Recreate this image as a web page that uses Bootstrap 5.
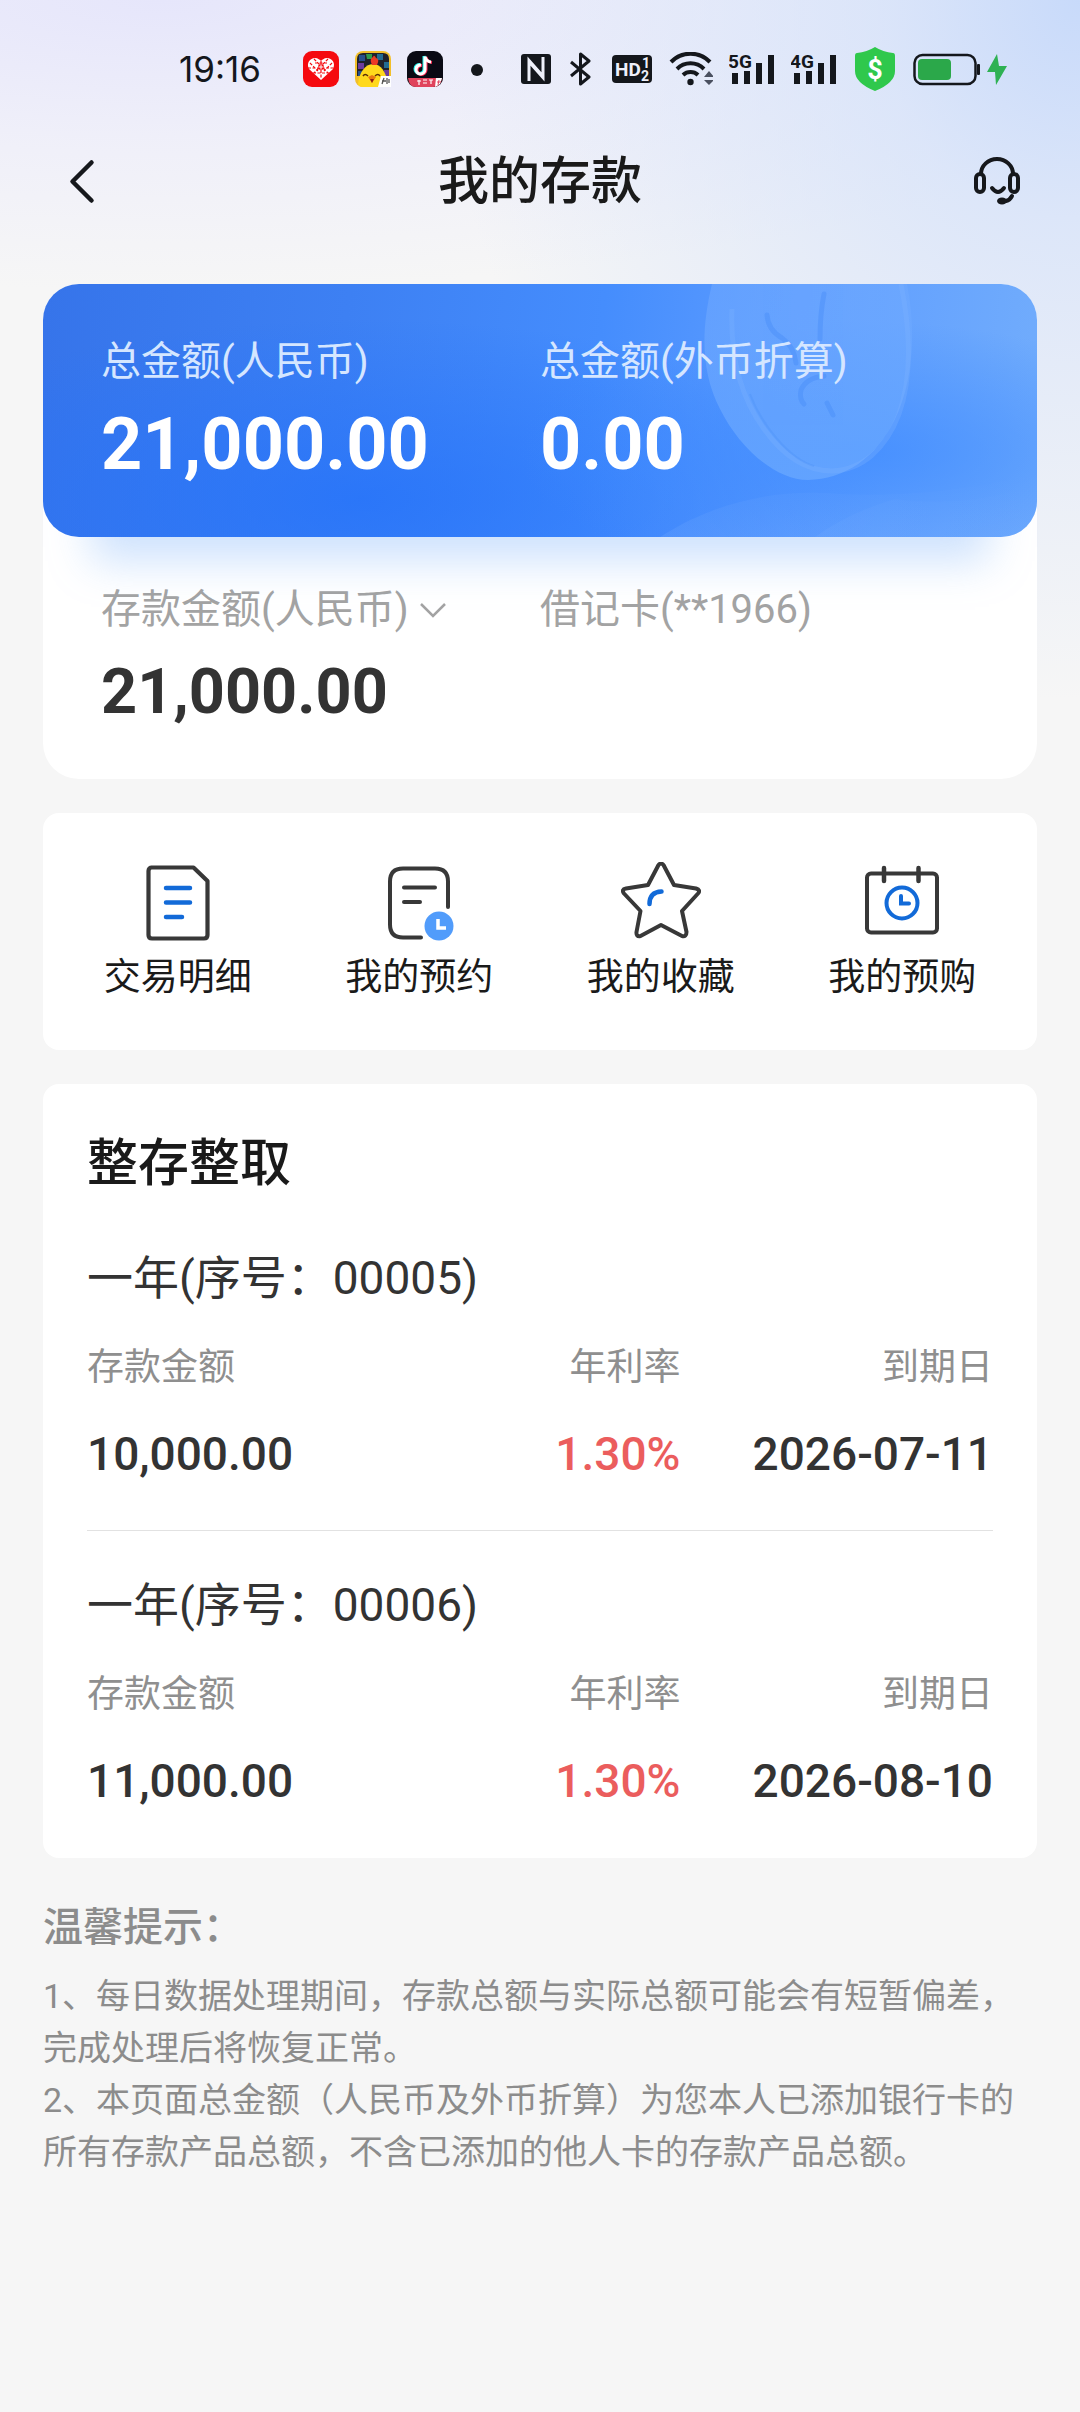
<!DOCTYPE html>
<html lang="zh-CN">
<head>
<meta charset="utf-8">
<meta name="viewport" content="width=device-width, initial-scale=1">
<title>我的存款</title>
<link href="https://cdn.jsdelivr.net/npm/bootstrap@5.3.0/dist/css/bootstrap.min.css" rel="stylesheet">
<style>
  body {
    font-family: Roboto, "Noto Sans CJK SC", sans-serif;
    font-size: 40px;
    line-height: 56px;
    color: #333;
    min-height: 100vh;
    background:
      radial-gradient(ellipse 640px 700px at 100% 0, #c8dafa 0, rgba(212,225,250,.75) 32%, rgba(246,246,246,0) 100%) no-repeat,
      radial-gradient(ellipse 1100px 290px at 15% 0, #e6e6fb 0, rgba(238,238,250,.8) 50%, rgba(246,246,246,0) 100%) no-repeat,
      #f6f6f6;
  }
  .status-bar { height: 138px; padding-right: 73px; gap: 16px; color: #14171c; }
  .clock { font-family: Inter, sans-serif; font-size: 35px; margin-right: 26px; }
  .app-bar { height: 88px; padding: 0 60px; }
  .app-bar h1, .section-title { font-size: 51px; line-height: 64px; font-weight: 500; color: #1a1a1a; margin: 0; }
  .icon-btn { width: 56px; height: 56px; padding: 0; border: 0; background: none; display: block; }
  .icon-btn svg { display: block; }
  .page { padding: 58px 43px 64px; }
  .panel { background: #fff; border-radius: 16px; margin-top: 34px; }
  .summary { border-radius: 36px; margin-top: 0; }
  .hero {
    border-radius: 36px; padding: 50px 58px 37px; color: #fff;
    background:
      radial-gradient(ellipse 340px 130px at 82% 66%, rgba(64,140,255,.8), rgba(64,140,255,0)) no-repeat,
      radial-gradient(ellipse 520px 180px at 32% 85%, rgba(36,114,250,.75), rgba(36,114,250,0)) no-repeat,
      linear-gradient(97deg, #3674ea 0%, #3d80f3 30%, #458dfd 55%, #5e9dff 75%, #72adfc 100%);
    box-shadow: 0 72px 40px -48px rgba(120,176,250,.36);
  }
  .hero-art { position: absolute; right: 0; top: 0; width: 397px; height: 100%; border-radius: 0 36px 36px 0; }
  .hero .row { position: relative; }
  .caption-soft { color: #d5e6ff; }
  .total-sum { font-size: 72px; line-height: 110px; font-weight: 700; }
  .detail { padding: 45px 58px 33px; color: #a3a3a3; }
  .detail-sum { font-size: 63px; line-height: 108px; font-weight: 700; color: #333; }
  .kind-select { appearance: none; border: 0; background: none; padding: 0; color: inherit; font: inherit; line-height: 56px; }
  .shortcuts { padding: 49px 14px 44px; }
  .shortcuts a { color: #1a1a1a; font-size: 37px; gap: 8px; }
  .deposits { padding: 48px 44px 1px; }
  .deposit { padding-bottom: 44px; }
  .deposit + .deposit { border-top: 1px solid #e2e2e2; padding-top: 42px; }
  .deposit h3 { font-size: 46px; line-height: 64px; font-weight: 400; margin: 0; }
  .deposit-first { margin-top: 50px; }
  .figures { width: 100%; margin-top: 30px; table-layout: fixed; }
  .figures th { font-size: 37px; line-height: 56px; font-weight: 400; color: #8f8f8f; padding: 0; }
  .figures td { font-size: 46px; line-height: 64px; font-weight: 500; padding: 26px 0 0; }
  .figures .c-sum { width: 33%; }
  .figures .c-rate { width: 32.5%; }
  .figures .rate { color: #eb5d5d; }
  .tips { margin-top: 42px; color: #8c8c8c; font-size: 34px; line-height: 52px; }
  .tips h2 { font-size: 40px; line-height: 56px; font-weight: 500; margin: 0 0 14px; }
</style>
</head>
<body>
<div class="status-bar d-flex align-items-center justify-content-end">
  <span class="clock">19:16</span>
  <svg width="36" height="36" viewBox="0 0 36 36" aria-hidden="true"><rect width="36" height="36" rx="9" fill="#f50a0f"/><path d="M18 29 6 18C3 12 7 7 12 7c3 0 5 2 6 3 1-1 3-3 6-3 5 0 9 5 6 11z" fill="#fff"/><path d="m7 12 8 8M11 8l14 14M29 12l-8 8M25 8 11 22M18 10v18M5 17h26M12 12h12M10 22h16" stroke="#f50a0f" stroke-width="1.2" stroke-dasharray="3 1.5" fill="none"/><circle cx="18" cy="16" r="3" fill="#f50a0f"/><path d="M18 13.500v5M15.500 16h5" stroke="#fff"/></svg>
  <svg width="36" height="36" viewBox="0 0 36 36" aria-hidden="true"><rect width="36" height="36" rx="8" fill="#f2bf2a"/><path d="M2 8q0-6 6-6h20q6 0 6 6v17H2z" fill="#20222c"/><path d="M4 4h6v6H4zM3 20h4v5H3z" fill="#274f8c"/><path d="M11 3h6v5h-5z" fill="#2d9a4c"/><path d="M22 3h6v6h-6zM29 11h5v6h-5z" fill="#236b91"/><path d="M3 12h6v6H3zM29 19h5v6h-5z" fill="#6d3c9d"/><path d="M3 33c1-11 7-20 15-20s13 8 15 20q-2 3-7 3H8q-4 0-5-3z" fill="#ffd91c"/><path d="M17 14q-3-6 1-8 1-3 3 1 4 1 1 7z" fill="#ea3b26"/><path d="M8 25q2-3 5 0M20 25q3-3 5 0" stroke="#5a2e08" stroke-width="1.500" fill="none"/><path d="m13 26 4-2 4 2-4 6z" fill="#e77812"/><path d="M15 28h4l-2 4z" fill="#8e1c12"/><path d="M26 25h10v11H23z" fill="#fff"/><path d="m27 33 2-6m-2 3h4m1-3v6m2-5v4" stroke="#555" stroke-width="1.300"/></svg>
  <svg width="36" height="36" viewBox="0 0 36 36" aria-hidden="true"><rect width="36" height="36" rx="9" fill="#0a0a14"/><path d="M1 27h34q-1 9-9 9H9q-7 0-8-9z" fill="#e0435c"/><path d="M29 27h6l-2 6-5 3z" fill="#fff"/><path d="m32 29-1 5m-1-3h4" stroke="#e0435c"/><g fill="none" stroke-width="3"><path d="M17 5v13a4.500 4.500 0 1 1-4-4.500M17 5q1 5 6 5.500" stroke="#25f4ee"/><path d="M19 6v13a4.500 4.500 0 1 1-4-4.500M19 6q1 5 6 5.500" stroke="#fe2c55"/><path d="M18 5.500v13a4.500 4.500 0 1 1-4-4.500M18 5.500q1 5 6 5.500" stroke="#fff"/></g><path d="M10 30h4m-2-1v5m4-5h4m-4 3h4m2-3h4m-2 0v4" stroke="#fff" stroke-width="1.200"/></svg>
  <svg width="46" height="36" viewBox="0 0 46 36" aria-hidden="true"><circle cx="18" cy="19" r="6" fill="#14171c"/></svg>
  <svg width="30" height="34" viewBox="0 0 30 34" aria-hidden="true"><rect y="2" width="30" height="30" rx="3" fill="#14171c"/><path d="M8 29V8.500L20 22M22 5v20.500L10 12" fill="none" stroke="#eef0fa" stroke-width="3"/></svg>
  <svg width="28" height="34" viewBox="0 0 28 34" aria-hidden="true"><path d="m4 10 18 15-8.500 7V2L22 9 4 24" fill="none" stroke="#14171c" stroke-width="3" stroke-linejoin="round"/></svg>
  <svg width="42" height="34" viewBox="0 0 42 34" aria-hidden="true"><rect x="1" y="3" width="40" height="28" rx="4" fill="#14171c"/><g fill="#eef0fa" font-family="Roboto, sans-serif" font-weight="700"><text x="4" y="24" font-size="19">HD</text><text x="31" y="16" font-size="14">1</text><text x="30" y="29" font-size="14">2</text></g></svg>
  <svg width="44" height="34" viewBox="0 0 44 34" aria-hidden="true"><g fill="none" stroke="#14171c" stroke-width="4"><path d="M2 10a27 27 0 0 1 39 0"/><path d="M8 17a19 19 0 0 1 27 0"/><path d="M14 23a11 11 0 0 1 15 0"/></g><circle cx="21.500" cy="30" r="3.200" fill="#14171c"/><path d="m35 25 5-6 5 6zM35 28h10l-5 5z" fill="#4a5060"/></svg>
  <svg width="46" height="36" viewBox="0 0 46 36" aria-hidden="true"><path d="M3 22h6v11H3zM15 20h6v13h-6zM27 12h6v21h-6zM39 4h6v29h-6z" fill="#14171c"/><text x="-1" y="17" font-family="Roboto, sans-serif" font-size="19" font-weight="700" fill="#14171c">5G</text></svg>
  <svg width="46" height="36" viewBox="0 0 46 36" aria-hidden="true"><path d="M3 22h6v11H3zM15 20h6v13h-6zM27 12h6v21h-6zM39 4h6v29h-6z" fill="#14171c"/><text x="-1" y="17" font-family="Roboto, sans-serif" font-size="19" font-weight="700" fill="#14171c">4G</text></svg>
  <svg width="44" height="44" viewBox="0 0 44 44" aria-hidden="true"><path d="M22 0q8 5 18 6 2 0 2 3v15q0 12-20 20Q2 36 2 24V9q0-3 2-3Q14 5 22 0z" fill="#2fc84c"/><text x="22" y="32" text-anchor="middle" font-family="Roboto, sans-serif" font-weight="700" font-size="27" fill="#fff">$</text></svg>
  <svg width="94" height="34" viewBox="0 0 94 34" aria-hidden="true"><rect x="1.500" y="3" width="61" height="29" rx="8" fill="none" stroke="#14171c" stroke-width="2.500"/><rect x="5" y="7" width="33" height="21" rx="4" fill="#2ba84a"/><rect x="64" y="12" width="3" height="11" rx="1" fill="#14171c"/><path d="M84 2 74 20h8l1 13 11-19h-8z" fill="#2eb153"/></svg>
</div>

<header class="app-bar d-flex align-items-center justify-content-between">
  <button type="button" class="icon-btn" aria-label="返回"><svg width="56" height="56" viewBox="0 1 56 56"><path d="M31.500 9.500 12.500 28.500l19 19" fill="none" stroke="#16181c" stroke-width="4.500" stroke-linecap="round" stroke-linejoin="round"/></svg></button>
  <h1>我的存款</h1>
  <button type="button" class="icon-btn" aria-label="客服"><svg width="56" height="56" viewBox="0 1 56 56"><g fill="none" stroke="#16181c" stroke-width="4" stroke-linecap="round"><rect x="12" y="21" width="8" height="18" rx="4"/><rect x="46" y="21" width="8" height="18" rx="4"/><path d="M17 21a16 15 0 0 1 32 0M28 35q6 8 12 0M48 43q-2 4-6 5"/></g><ellipse cx="38" cy="48" rx="5" ry="3.500" fill="#16181c"/></svg></button>
</header>

<main class="page">
  <section class="panel summary">
    <div class="hero position-relative">
      <svg class="hero-art" viewBox="0 0 397 253" preserveAspectRatio="xMaxYMid slice" aria-hidden="true">
        <defs>
          <linearGradient id="coin" x1="0" y1="0" x2=".3" y2="1"><stop offset="0" stop-color="#70a9ff" stop-opacity=".55"/><stop offset="1" stop-color="#69a8ff" stop-opacity=".75"/></linearGradient>
          <linearGradient id="palm" x1="0" y1="1" x2="1" y2="0"><stop offset="0" stop-color="#6aa5ff" stop-opacity=".3"/><stop offset="1" stop-color="#6aa5ff" stop-opacity="0"/></linearGradient>
        </defs>
        <path d="M20 253C80 215 140 205 200 210q90 5 197-20v63z" fill="url(#palm)"/>
        <path d="M175 253q35-25 80-38 70 10 142-15v53z" fill="url(#palm)"/>
        <path d="M72 0C60 50 62 90 80 125c20 40 56 71 88 71 36-1 68-21 87-61 17-35 22-85 12-135z" fill="url(#coin)"/>
        <path d="M92 25c-2 50 10 90 32 120 20 28 42 42 68 42 30-1 54-22 67-57 12-34 12-80 2-130" fill="none" stroke="#7fb4ff" stroke-width="5" opacity=".3"/>
        <path d="M110 110c12 32 40 65 64 72" fill="none" stroke="#4a8df5" stroke-width="2" opacity=".3"/>
        <g fill="none" stroke="#4187f5" stroke-linecap="round" opacity=".35"><path d="M127 31q1 15 15 23 12 8 14 25M184 10q-4 20-4 45" stroke-width="5"/><path d="M184 92q-18 2-23 14-2 9 3 14M187 119l6 12" stroke-width="5"/></g>
      </svg>
      <div class="row g-0">
        <div class="col-6"><div class="caption-soft">总金额(人民币)</div><div class="total-sum">21,000.00</div></div>
        <div class="col-6"><div class="caption-soft">总金额(外币折算)</div><div class="total-sum">0.00</div></div>
      </div>
    </div>
    <div class="detail row g-0">
      <div class="col-6">
        <div class="d-flex align-items-center gap-2">
          <select class="kind-select" aria-label="存款币种"><option>存款金额(人民币)</option></select>
          <svg width="32" height="32" viewBox="0 0 32 32" aria-hidden="true"><path d="m4 10 12 12 12-12" fill="none" stroke="#a3a3a3" stroke-width="2.500"/></svg>
        </div>
        <div class="detail-sum">21,000.00</div>
      </div>
      <div class="col-6">借记卡(**1966)</div>
    </div>
  </section>

  <nav class="panel shortcuts row g-0">
    <a href="#" class="col-3 d-flex flex-column align-items-center text-decoration-none">
      <svg width="80" height="80" viewBox="0 0 80 80" aria-hidden="true"><path d="M13 5.500h42.500L69.500 19v54q0 3.500-3.500 3.500H14q-3.500 0-3.500-3.500V9q0-3.500 3.500-3.500z" fill="none" stroke="#383838" stroke-width="4.200" stroke-linejoin="round"/><path d="M28 26h24M28 40.500h24M28 55h16" stroke="#126ad8" stroke-width="4.500" stroke-linecap="round"/></svg>
      <span>交易明细</span></a>
    <a href="#" class="col-3 d-flex flex-column align-items-center text-decoration-none">
      <svg width="80" height="80" viewBox="0 0 80 80" aria-hidden="true"><path d="M42 75.500H24q-13 0-13-13v-43q0-13 13-13h32q13 0 13 13V45" fill="none" stroke="#383838" stroke-width="4" stroke-linecap="round"/><path d="M25 25.500h31M25 40h16" stroke="#383838" stroke-width="4" stroke-linecap="round"/><circle cx="60" cy="64" r="14.500" fill="#519cfb"/><path d="M59 57v9h8" fill="none" stroke="#fff" stroke-width="3.500"/></svg>
      <span>我的预约</span></a>
    <a href="#" class="col-3 d-flex flex-column align-items-center text-decoration-none">
      <svg width="80" height="80" viewBox="0 0 80 80" aria-hidden="true"><path d="M37.500 3Q40 0 42.500 3L53 23l22 3.500q5 1.500 2 5L61 49l4.500 21q0 5-4.500 4L40 63 19.500 74q-4.500 1-4-4L19.500 49 3 31.500q-3-4 2-5L27 23z" fill="none" stroke="#383838" stroke-width="4" stroke-linejoin="round"/><path d="M28.500 42q0-12 12-12.500" fill="none" stroke="#126ad8" stroke-width="4.500" stroke-linecap="round"/></svg>
      <span>我的收藏</span></a>
    <a href="#" class="col-3 d-flex flex-column align-items-center text-decoration-none">
      <svg width="80" height="80" viewBox="0 0 80 80" aria-hidden="true"><rect x="5" y="11.500" width="70" height="59" rx="4" fill="none" stroke="#383838" stroke-width="4"/><path d="M22 6v13M56.500 6v13" stroke="#383838" stroke-width="4.500" stroke-linecap="round"/><circle cx="40" cy="41" r="15.500" fill="none" stroke="#126ad8" stroke-width="4"/><path d="M39 34v7.500h8" fill="none" stroke="#126ad8" stroke-width="4" stroke-linecap="round"/></svg>
      <span>我的预购</span></a>
  </nav>

  <section class="panel deposits">
    <h2 class="section-title">整存整取</h2>
    <article class="deposit deposit-first">
      <h3>一年(序号：00005)</h3>
      <table class="figures">
        <thead><tr><th class="c-sum">存款金额</th><th class="c-rate text-end">年利率</th><th class="text-end">到期日</th></tr></thead>
        <tbody><tr><td>10,000.00</td><td class="rate text-end">1.30%</td><td class="text-end">2026-07-11</td></tr></tbody>
      </table>
    </article>
    <article class="deposit">
      <h3>一年(序号：00006)</h3>
      <table class="figures">
        <thead><tr><th class="c-sum">存款金额</th><th class="c-rate text-end">年利率</th><th class="text-end">到期日</th></tr></thead>
        <tbody><tr><td>11,000.00</td><td class="rate text-end">1.30%</td><td class="text-end">2026-08-10</td></tr></tbody>
      </table>
    </article>
  </section>

  <section class="tips">
    <h2>温馨提示：</h2>
    <div>1、每日数据处理期间，存款总额与实际总额可能会有短暂偏差，完成处理后将恢复正常。</div>
    <div>2、本页面总金额（人民币及外币折算）为您本人已添加银行卡的所有存款产品总额，不含已添加的他人卡的存款产品总额。</div>
  </section>
</main>
<script src="https://cdn.jsdelivr.net/npm/bootstrap@5.3.0/dist/js/bootstrap.bundle.min.js"></script>
</body>
</html>
